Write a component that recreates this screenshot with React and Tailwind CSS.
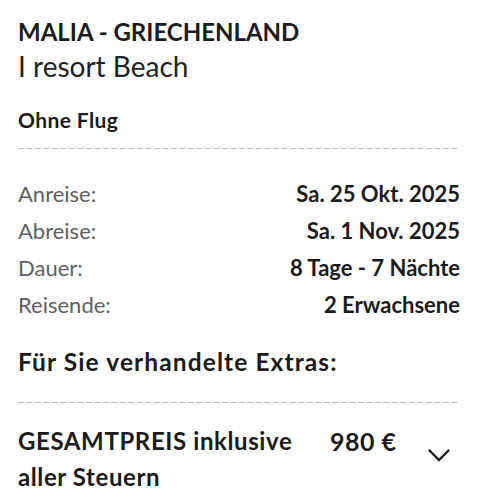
import React from "react";

const rows = [
  ["Anreise:", "Sa. 25 Okt. 2025"],
  ["Abreise:", "Sa. 1 Nov. 2025"],
  ["Dauer:", "8 Tage - 7 Nächte"],
  ["Reisende:", "2 Erwachsene"],
];

function Dashes({ className }) {
  return (
    <div
      className={
        "h-px bg-[linear-gradient(to_right,#bdbdbd_62%,transparent_0)] bg-[length:8.5px_1px] bg-repeat-x " +
        className
      }
    />
  );
}

export default function App() {
  return (
    <div className="w-[478px] h-[500px] overflow-hidden bg-white px-[18px] pt-[16px] text-[#1b1b1b] font-['Lato',sans-serif]">
      <div className="text-[24px] font-bold leading-[32px]">MALIA - GRIECHENLAND</div>
      <div className="text-[28px] leading-[36px] text-[#222]">I resort Beach</div>
      <div className="mt-[22px] text-[21px] font-bold leading-[28px] tracking-[0.4px]">Ohne Flug</div>
      <Dashes className="mt-[14px]" />
      <div className="mt-[31px] flex flex-col gap-[9px]">
        {rows.map(([k, v]) => (
          <div key={k} className="flex items-center justify-between text-[22px] leading-[28px]">
            <span className="text-[#5f5f5f]">{k}</span>
            <span className="font-bold">{v}</span>
          </div>
        ))}
      </div>
      <div className="mt-[28px] text-[24.5px] font-bold leading-[30px] tracking-[1.1px]">Für Sie verhandelte Extras:</div>
      <Dashes className="mt-[25px]" />
      <div className="mt-[20px] flex items-start">
        <div className="w-[300px] text-[24px] font-bold leading-[36px] tracking-[0.6px]">GESAMTPREIS inklusive aller Steuern</div>
        <div className="ml-[12px] mt-[2px] text-[25px] font-bold leading-[32px] tracking-[0.5px]">980 €</div>
        <svg className="ml-auto mt-[26px] mr-[10px]" width="22" height="13" viewBox="0 0 22 13" fill="none" stroke="#1b1b1b" strokeWidth="2.4" strokeLinecap="round">
          <path d="M1.5 1.5 L11 11 L20.5 1.5" />
        </svg>
      </div>
    </div>
  );
}
